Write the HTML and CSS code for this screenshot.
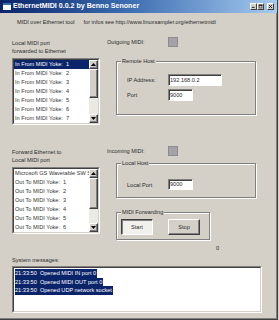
FILE: index.html
```html
<!DOCTYPE html>
<html lang="en">

<head>
    <meta charset="UTF-8">
    <meta name="viewport" content="width=device-width, initial-scale=1.0">
    <title>EthernetMIDI 0.0.2</title>
    <link rel="stylesheet" href="styles.css">
</head>

<body>
    <div class="window">
        <div class="titlebar">
            <svg class="app-icon" width="8" height="7" viewBox="0 0 8 7">
                <rect x="0" y="0" width="8" height="7" fill="#fff" />
                <rect x="0" y="0" width="8" height="2" fill="#3a6ea5" />
            </svg>
            <span class="title">EthernetMIDI 0.0.2 by Benno Senoner</span>
            <div class="caption-btns">
                <span class="cbtn"><svg width="5" height="5" viewBox="0 0 5 5"><rect x="0" y="3" width="4" height="1" fill="#000" /></svg></span>
                <span class="cbtn"><svg width="5" height="5" viewBox="0 0 5 5"><rect x="0.5" y="0.5" width="4" height="4" fill="none" stroke="#000" stroke-width="1" /><rect x="0" y="0" width="5" height="1.5" fill="#000" /></svg></span>
                <span class="cbtn close"><svg width="5" height="5" viewBox="0 0 5 5"><path d="M0.5 0.5 L4.5 4.5 M4.5 0.5 L0.5 4.5" stroke="#000" stroke-width="1" /></svg></span>
            </div>
        </div>

        <div class="client">
            <p class="intro"><span>MIDI over Ethernet tool</span><span>for infos see http://www.linuxsampler.org/ethernetmidi</span></p>

            <div class="section top">
                <div class="col-left">
                    <p class="caption">Local MIDI port<br>forwarded to Ethernet</p>
                    <div class="listbox">
                        <div class="listbox-inner">
                            <ul class="items">
                                <li class="selected">In From MIDI Yoke:&nbsp; 1</li>
                                <li>In From MIDI Yoke:&nbsp; 2</li>
                                <li>In From MIDI Yoke:&nbsp; 3</li>
                                <li>In From MIDI Yoke:&nbsp; 4</li>
                                <li>In From MIDI Yoke:&nbsp; 5</li>
                                <li>In From MIDI Yoke:&nbsp; 6</li>
                                <li>In From MIDI Yoke:&nbsp; 7</li>
                            </ul>
                            <div class="vscroll">
                                <span class="sbtn"><svg width="5" height="3" viewBox="0 0 5 3"><path d="M2.5 0 L5 3 L0 3 Z" fill="#000" /></svg></span>
                                <span class="thumb thumb-a"></span>
                                <span class="track"></span>
                                <span class="sbtn"><svg width="5" height="3" viewBox="0 0 5 3"><path d="M0 0 L5 0 L2.5 3 Z" fill="#000" /></svg></span>
                            </div>
                        </div>
                    </div>
                </div>
                <div class="col-right">
                    <div class="indicator"><span>Outgoing MIDI:</span><i class="led"></i></div>
                    <div class="group remote">
                        <div class="group-title">Remote Host</div>
                        <div class="fields">
                            <span>IP Address:</span>
                            <div class="edit ip">192.168.0.2</div>
                            <span>Port</span>
                            <div class="edit port">9000</div>
                        </div>
                    </div>
                </div>
            </div>

            <div class="section bottom">
                <div class="col-left">
                    <p class="caption">Forward Ethernet to<br>Local MIDI port</p>
                    <div class="listbox">
                        <div class="listbox-inner">
                            <ul class="items">
                                <li>Microsoft GS Wavetable SW S</li>
                                <li>Out To MIDI Yoke:&nbsp; 1</li>
                                <li>Out To MIDI Yoke:&nbsp; 2</li>
                                <li>Out To MIDI Yoke:&nbsp; 3</li>
                                <li>Out To MIDI Yoke:&nbsp; 4</li>
                                <li>Out To MIDI Yoke:&nbsp; 5</li>
                                <li>Out To MIDI Yoke:&nbsp; 6</li>
                            </ul>
                            <div class="vscroll">
                                <span class="sbtn"><svg width="5" height="3" viewBox="0 0 5 3"><path d="M2.5 0 L5 3 L0 3 Z" fill="#000" /></svg></span>
                                <span class="thumb thumb-b"></span>
                                <span class="track"></span>
                                <span class="sbtn"><svg width="5" height="3" viewBox="0 0 5 3"><path d="M0 0 L5 0 L2.5 3 Z" fill="#000" /></svg></span>
                            </div>
                        </div>
                    </div>
                </div>
                <div class="col-right">
                    <div class="indicator"><span>Incoming MIDI:</span><i class="led"></i></div>
                    <div class="group local">
                        <div class="group-title">Local Host</div>
                        <div class="fields">
                            <span>Local Port</span>
                            <div class="edit port">9000</div>
                        </div>
                    </div>
                    <div class="group forwarding">
                        <div class="group-title">MIDI Forwarding</div>
                        <div class="buttons">
                            <span class="btn pressed">Start</span>
                            <span class="btn">Stop</span>
                        </div>
                    </div>
                    <p class="counter">0</p>
                </div>
            </div>

            <p class="caption sys-label">System messages:</p>
            <div class="messages">
                <div class="messages-inner">
                    <span class="msg">21:33:50&nbsp; Opened MIDI IN port 0</span>
                    <span class="msg">21:33:50&nbsp; Opened MIDI OUT port 0</span>
                    <span class="msg">21:33:50&nbsp; Opened UDP network socket</span>
                </div>
            </div>
        </div>
    </div>
</body>

</html>
```

FILE: styles.css
```css
html,
body {
    margin: 0;
    padding: 0;
    overflow: hidden;
}

body {
    background-color: #d4d0c8;
    font-family: "Liberation Sans", Arial, sans-serif;
    font-size: 5.6px;
    line-height: 8px;
    color: #2a2a2a;
}

p {
    margin: 0;
}

.window {
    width: 277px;
    height: 319px;
    border-right: 1px solid #404040;
    border-bottom: 1px solid #404040;
    box-shadow: inset -1px -1px #808080;
}

/* caption bar */
.titlebar {
    height: 13px;
    display: flex;
    align-items: center;
    padding: 0 2px 0 3px;
    background: linear-gradient(to right, #0a246a, #3b6cb0 45%, #a6caf0);
    color: #fff;
}

.app-icon {
    display: block;
    margin-right: 2px;
}

.title {
    font-weight: bold;
    font-size: 7.1px;
    line-height: 13px;
    flex: 1;
    white-space: nowrap;
}

.caption-btns {
    display: flex;
    margin-right: 1px;
}

.cbtn {
    width: 7px;
    height: 7px;
    box-sizing: border-box;
    display: flex;
    align-items: center;
    justify-content: center;
    background-color: #d4d0c8;
    border: 1px solid;
    border-color: #fff #404040 #404040 #fff;
}

.cbtn svg {
    display: block;
    transform: scale(0.8);
}

.cbtn.close {
    margin-left: 3px;
}

/* client area */
.client {
    padding-left: 12px;
}

.intro {
    margin-top: 5px;
    padding-left: 5px;
    white-space: nowrap;
}

.intro span+span {
    margin-left: 9px;
}

.section {
    display: grid;
    grid-template-columns: 88px 149px;
    column-gap: 7px;
}

.section.top {
    margin-top: 11px;
}

.section.bottom {
    margin-top: 21px;
}

.col-left {
    padding-top: 2px;
}

.caption {
    white-space: nowrap;
}

/* list boxes */
.listbox {
    margin-top: 3px;
    height: 67px;
    box-sizing: border-box;
    border: 1px solid;
    border-color: #808080 #fff #fff #808080;
    background-color: #fff;
}

.listbox-inner {
    height: 100%;
    box-sizing: border-box;
    border: 1px solid;
    border-color: #404040 #d4d0c8 #d4d0c8 #404040;
    display: flex;
    overflow: hidden;
}

.items {
    list-style: none;
    margin: 0;
    padding: 0;
    flex: 1;
    min-width: 0;
}

.items li {
    height: 9px;
    line-height: 9px;
    padding-left: 1px;
    white-space: nowrap;
    overflow: hidden;
    color: #333;
}

.items li.selected {
    background-color: #0a246a;
    color: #fff;
}

.vscroll {
    width: 9px;
    display: flex;
    flex-direction: column;
}

.sbtn,
.thumb {
    box-sizing: border-box;
    background-color: #d4d0c8;
    border: 1px solid;
    border-color: #fff #404040 #404040 #fff;
    box-shadow: inset -1px -1px #808080;
}

.sbtn {
    height: 9px;
    display: flex;
    align-items: center;
    justify-content: center;
}

.sbtn svg {
    display: block;
}

.thumb-a {
    height: 29px;
}

.thumb-b {
    height: 31px;
}

.track {
    flex: 1;
    background-color: #ebe9e4;
}

/* indicator squares */
.indicator {
    height: 10px;
    display: grid;
    grid-template-columns: 61px 10px;
    align-items: center;
}

.led {
    display: block;
    width: 10px;
    height: 10px;
    box-sizing: border-box;
    background-color: #a4a2a7;
    border: 1px solid #8e8c91;
}

/* group boxes */
.group {
    margin-left: 9px;
    box-sizing: border-box;
    border: 1px solid #808080;
    box-shadow: inset 1px 1px #fff, 1px 1px #fff;
}

.group-title {
    display: table;
    margin: -5px 0 0 4px;
    padding: 0 1px;
    background-color: #d4d0c8;
}

.group.remote {
    margin-top: 14px;
    width: 140px;
    height: 54px;
}

.group.local {
    margin-top: 7px;
    width: 140px;
    height: 35px;
}

.group.forwarding {
    margin-top: 14px;
    width: 94px;
    height: 28px;
}

.fields {
    display: grid;
    grid-template-columns: 41px auto;
    row-gap: 3px;
    align-items: center;
    padding-left: 10px;
}

.remote .fields {
    margin-top: 9px;
}

.local .fields {
    margin-top: 12px;
}

.edit {
    box-sizing: border-box;
    height: 12px;
    line-height: 10px;
    padding-left: 1px;
    background-color: #fff;
    border: 1px solid;
    border-color: #808080 #fff #fff #808080;
    box-shadow: inset 1px 1px #404040;
    white-space: nowrap;
}

.edit.ip {
    width: 54px;
}

.edit.port {
    width: 25px;
}

.local .edit {
    height: 11px;
    line-height: 9px;
}

.buttons {
    display: flex;
    gap: 15px;
    margin-top: 3px;
    padding-left: 4px;
}

.btn {
    width: 32px;
    height: 16px;
    box-sizing: border-box;
    display: flex;
    align-items: center;
    justify-content: center;
    background-color: #d4d0c8;
    border: 1px solid;
    border-color: #fff #404040 #404040 #fff;
    box-shadow: inset -1px -1px #808080;
}

.btn.pressed {
    background-color: #f1f0ec;
    border-color: #404040 #fff #fff #404040;
    box-shadow: inset 1px 1px #808080;
}

.counter {
    margin-top: 4px;
    padding-left: 109px;
}

/* system messages */
.sys-label {
    margin-top: 4px;
}

.messages {
    margin-top: 2px;
    width: 250px;
    height: 47px;
    box-sizing: border-box;
    border: 1px solid;
    border-color: #808080 #fff #fff #808080;
    background-color: #fff;
}

.messages-inner {
    height: 100%;
    box-sizing: border-box;
    border: 1px solid;
    border-color: #404040 #d4d0c8 #d4d0c8 #404040;
    padding: 1px 0 0 1px;
}

.msg {
    display: table;
    line-height: 8.5px;
    padding-right: 1px;
    background-color: #0a246a;
    color: #fff;
    white-space: nowrap;
}
```
